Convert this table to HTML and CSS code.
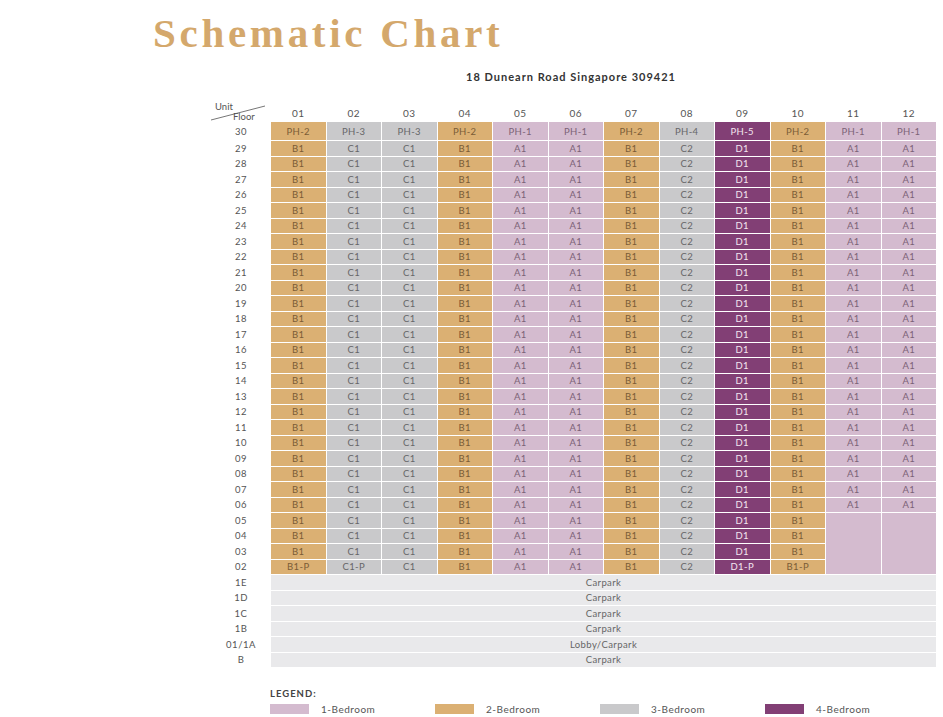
FILE: index.html
```html
<!DOCTYPE html>
<html>
<head>
<meta charset="utf-8">
<title>Schematic Chart</title>
<link rel="stylesheet" href="styles.css">
</head>
<body>
<div class="page">
  <h1 class="title">Schematic Chart</h1>
  <div class="chart">
    <div class="address">18 Dunearn Road Singapore 309421</div>
    <div class="grid">
      <div class="corner">
        <span class="unit">Unit</span>
        <svg class="slash" width="60" height="20" viewBox="0 0 60 20"><line x1="4" y1="17" x2="58" y2="3" stroke="#666" stroke-width="0.9"/></svg>
        <span class="floor">Floor</span>
      </div>
      <div class="ch">01</div><div class="ch">02</div><div class="ch">03</div><div class="ch">04</div><div class="ch">05</div><div class="ch">06</div><div class="ch">07</div><div class="ch">08</div><div class="ch">09</div><div class="ch">10</div><div class="ch">11</div><div class="ch">12</div>

      <div class="fl top">30</div>
      <div class="c t top">PH-2</div><div class="c g top">PH-3</div><div class="c g top">PH-3</div><div class="c t top">PH-2</div><div class="c p top">PH-1</div><div class="c p top">PH-1</div><div class="c t top">PH-2</div><div class="c g top">PH-4</div><div class="c d top">PH-5</div><div class="c t top">PH-2</div><div class="c p top">PH-1</div><div class="c p top">PH-1</div>

      <div class="fl">29</div><div class="c t">B1</div><div class="c g">C1</div><div class="c g">C1</div><div class="c t">B1</div><div class="c p">A1</div><div class="c p">A1</div><div class="c t">B1</div><div class="c g">C2</div><div class="c d">D1</div><div class="c t">B1</div><div class="c p">A1</div><div class="c p">A1</div>
      <div class="fl">28</div><div class="c t">B1</div><div class="c g">C1</div><div class="c g">C1</div><div class="c t">B1</div><div class="c p">A1</div><div class="c p">A1</div><div class="c t">B1</div><div class="c g">C2</div><div class="c d">D1</div><div class="c t">B1</div><div class="c p">A1</div><div class="c p">A1</div>
      <div class="fl">27</div><div class="c t">B1</div><div class="c g">C1</div><div class="c g">C1</div><div class="c t">B1</div><div class="c p">A1</div><div class="c p">A1</div><div class="c t">B1</div><div class="c g">C2</div><div class="c d">D1</div><div class="c t">B1</div><div class="c p">A1</div><div class="c p">A1</div>
      <div class="fl">26</div><div class="c t">B1</div><div class="c g">C1</div><div class="c g">C1</div><div class="c t">B1</div><div class="c p">A1</div><div class="c p">A1</div><div class="c t">B1</div><div class="c g">C2</div><div class="c d">D1</div><div class="c t">B1</div><div class="c p">A1</div><div class="c p">A1</div>
      <div class="fl">25</div><div class="c t">B1</div><div class="c g">C1</div><div class="c g">C1</div><div class="c t">B1</div><div class="c p">A1</div><div class="c p">A1</div><div class="c t">B1</div><div class="c g">C2</div><div class="c d">D1</div><div class="c t">B1</div><div class="c p">A1</div><div class="c p">A1</div>
      <div class="fl">24</div><div class="c t">B1</div><div class="c g">C1</div><div class="c g">C1</div><div class="c t">B1</div><div class="c p">A1</div><div class="c p">A1</div><div class="c t">B1</div><div class="c g">C2</div><div class="c d">D1</div><div class="c t">B1</div><div class="c p">A1</div><div class="c p">A1</div>
      <div class="fl">23</div><div class="c t">B1</div><div class="c g">C1</div><div class="c g">C1</div><div class="c t">B1</div><div class="c p">A1</div><div class="c p">A1</div><div class="c t">B1</div><div class="c g">C2</div><div class="c d">D1</div><div class="c t">B1</div><div class="c p">A1</div><div class="c p">A1</div>
      <div class="fl">22</div><div class="c t">B1</div><div class="c g">C1</div><div class="c g">C1</div><div class="c t">B1</div><div class="c p">A1</div><div class="c p">A1</div><div class="c t">B1</div><div class="c g">C2</div><div class="c d">D1</div><div class="c t">B1</div><div class="c p">A1</div><div class="c p">A1</div>
      <div class="fl">21</div><div class="c t">B1</div><div class="c g">C1</div><div class="c g">C1</div><div class="c t">B1</div><div class="c p">A1</div><div class="c p">A1</div><div class="c t">B1</div><div class="c g">C2</div><div class="c d">D1</div><div class="c t">B1</div><div class="c p">A1</div><div class="c p">A1</div>
      <div class="fl">20</div><div class="c t">B1</div><div class="c g">C1</div><div class="c g">C1</div><div class="c t">B1</div><div class="c p">A1</div><div class="c p">A1</div><div class="c t">B1</div><div class="c g">C2</div><div class="c d">D1</div><div class="c t">B1</div><div class="c p">A1</div><div class="c p">A1</div>
      <div class="fl">19</div><div class="c t">B1</div><div class="c g">C1</div><div class="c g">C1</div><div class="c t">B1</div><div class="c p">A1</div><div class="c p">A1</div><div class="c t">B1</div><div class="c g">C2</div><div class="c d">D1</div><div class="c t">B1</div><div class="c p">A1</div><div class="c p">A1</div>
      <div class="fl">18</div><div class="c t">B1</div><div class="c g">C1</div><div class="c g">C1</div><div class="c t">B1</div><div class="c p">A1</div><div class="c p">A1</div><div class="c t">B1</div><div class="c g">C2</div><div class="c d">D1</div><div class="c t">B1</div><div class="c p">A1</div><div class="c p">A1</div>
      <div class="fl">17</div><div class="c t">B1</div><div class="c g">C1</div><div class="c g">C1</div><div class="c t">B1</div><div class="c p">A1</div><div class="c p">A1</div><div class="c t">B1</div><div class="c g">C2</div><div class="c d">D1</div><div class="c t">B1</div><div class="c p">A1</div><div class="c p">A1</div>
      <div class="fl">16</div><div class="c t">B1</div><div class="c g">C1</div><div class="c g">C1</div><div class="c t">B1</div><div class="c p">A1</div><div class="c p">A1</div><div class="c t">B1</div><div class="c g">C2</div><div class="c d">D1</div><div class="c t">B1</div><div class="c p">A1</div><div class="c p">A1</div>
      <div class="fl">15</div><div class="c t">B1</div><div class="c g">C1</div><div class="c g">C1</div><div class="c t">B1</div><div class="c p">A1</div><div class="c p">A1</div><div class="c t">B1</div><div class="c g">C2</div><div class="c d">D1</div><div class="c t">B1</div><div class="c p">A1</div><div class="c p">A1</div>
      <div class="fl">14</div><div class="c t">B1</div><div class="c g">C1</div><div class="c g">C1</div><div class="c t">B1</div><div class="c p">A1</div><div class="c p">A1</div><div class="c t">B1</div><div class="c g">C2</div><div class="c d">D1</div><div class="c t">B1</div><div class="c p">A1</div><div class="c p">A1</div>
      <div class="fl">13</div><div class="c t">B1</div><div class="c g">C1</div><div class="c g">C1</div><div class="c t">B1</div><div class="c p">A1</div><div class="c p">A1</div><div class="c t">B1</div><div class="c g">C2</div><div class="c d">D1</div><div class="c t">B1</div><div class="c p">A1</div><div class="c p">A1</div>
      <div class="fl">12</div><div class="c t">B1</div><div class="c g">C1</div><div class="c g">C1</div><div class="c t">B1</div><div class="c p">A1</div><div class="c p">A1</div><div class="c t">B1</div><div class="c g">C2</div><div class="c d">D1</div><div class="c t">B1</div><div class="c p">A1</div><div class="c p">A1</div>
      <div class="fl">11</div><div class="c t">B1</div><div class="c g">C1</div><div class="c g">C1</div><div class="c t">B1</div><div class="c p">A1</div><div class="c p">A1</div><div class="c t">B1</div><div class="c g">C2</div><div class="c d">D1</div><div class="c t">B1</div><div class="c p">A1</div><div class="c p">A1</div>
      <div class="fl">10</div><div class="c t">B1</div><div class="c g">C1</div><div class="c g">C1</div><div class="c t">B1</div><div class="c p">A1</div><div class="c p">A1</div><div class="c t">B1</div><div class="c g">C2</div><div class="c d">D1</div><div class="c t">B1</div><div class="c p">A1</div><div class="c p">A1</div>
      <div class="fl">09</div><div class="c t">B1</div><div class="c g">C1</div><div class="c g">C1</div><div class="c t">B1</div><div class="c p">A1</div><div class="c p">A1</div><div class="c t">B1</div><div class="c g">C2</div><div class="c d">D1</div><div class="c t">B1</div><div class="c p">A1</div><div class="c p">A1</div>
      <div class="fl">08</div><div class="c t">B1</div><div class="c g">C1</div><div class="c g">C1</div><div class="c t">B1</div><div class="c p">A1</div><div class="c p">A1</div><div class="c t">B1</div><div class="c g">C2</div><div class="c d">D1</div><div class="c t">B1</div><div class="c p">A1</div><div class="c p">A1</div>
      <div class="fl">07</div><div class="c t">B1</div><div class="c g">C1</div><div class="c g">C1</div><div class="c t">B1</div><div class="c p">A1</div><div class="c p">A1</div><div class="c t">B1</div><div class="c g">C2</div><div class="c d">D1</div><div class="c t">B1</div><div class="c p">A1</div><div class="c p">A1</div>
      <div class="fl">06</div><div class="c t">B1</div><div class="c g">C1</div><div class="c g">C1</div><div class="c t">B1</div><div class="c p">A1</div><div class="c p">A1</div><div class="c t">B1</div><div class="c g">C2</div><div class="c d">D1</div><div class="c t">B1</div><div class="c p">A1</div><div class="c p">A1</div>
      <div class="fl">05</div><div class="c t">B1</div><div class="c g">C1</div><div class="c g">C1</div><div class="c t">B1</div><div class="c p">A1</div><div class="c p">A1</div><div class="c t">B1</div><div class="c g">C2</div><div class="c d">D1</div><div class="c t">B1</div><div class="c p span4"></div><div class="c p span4"></div>
      <div class="fl">04</div><div class="c t">B1</div><div class="c g">C1</div><div class="c g">C1</div><div class="c t">B1</div><div class="c p">A1</div><div class="c p">A1</div><div class="c t">B1</div><div class="c g">C2</div><div class="c d">D1</div><div class="c t">B1</div>
      <div class="fl">03</div><div class="c t">B1</div><div class="c g">C1</div><div class="c g">C1</div><div class="c t">B1</div><div class="c p">A1</div><div class="c p">A1</div><div class="c t">B1</div><div class="c g">C2</div><div class="c d">D1</div><div class="c t">B1</div>
      <div class="fl">02</div><div class="c t">B1-P</div><div class="c g">C1-P</div><div class="c g">C1</div><div class="c t">B1</div><div class="c p">A1</div><div class="c p">A1</div><div class="c t">B1</div><div class="c g">C2</div><div class="c d">D1-P</div><div class="c t">B1-P</div>

      <div class="fl">1E</div><div class="c cp">Carpark</div>
      <div class="fl">1D</div><div class="c cp">Carpark</div>
      <div class="fl">1C</div><div class="c cp">Carpark</div>
      <div class="fl">1B</div><div class="c cp">Carpark</div>
      <div class="fl">01/1A</div><div class="c cp">Lobby/Carpark</div>
      <div class="fl">B</div><div class="c cp">Carpark</div>
    </div>
  </div>
  <div class="legend">
    <div class="legend-title">LEGEND:</div>
    <div class="legend-items">
      <div class="li"><span class="sw p"></span><span class="lt">1-Bedroom</span></div>
      <div class="li"><span class="sw t"></span><span class="lt">2-Bedroom</span></div>
      <div class="li"><span class="sw g"></span><span class="lt">3-Bedroom</span></div>
      <div class="li"><span class="sw d"></span><span class="lt">4-Bedroom</span></div>
    </div>
  </div>
</div>
</body>
</html>
```
FILE: styles.css
```css
html, body {
  margin: 0;
  padding: 0;
  background: #ffffff;
}
.page {
  width: 943px;
  height: 717px;
  overflow: hidden;
  font-family: "Lato", "DejaVu Sans", sans-serif;
}
.title {
  margin: 0;
  padding: 11px 0 0 153px;
  height: 44px;
  font-family: "Liberation Serif", serif;
  font-weight: 700;
  font-size: 41px;
  line-height: 44px;
  letter-spacing: 3.7px;
  color: #d4a86c;
}
.chart {
  margin-left: 205px;
  width: 732px;
}
.address {
  margin-top: 13px;
  height: 18px;
  line-height: 18px;
  text-align: center;
  font-size: 11px;
  font-weight: 700;
  letter-spacing: 1px;
  color: #333;
}
.grid {
  margin-top: 17px;
  display: grid;
  grid-template-columns: 65px repeat(12, 54.5px);
  grid-template-rows: 18px 18px repeat(34, 14.5px);
  gap: 1px;
  font-size: 9.5px;
}
.corner {
  position: relative;
  font-size: 9.5px;
  color: #555;
}
.unit {
  position: absolute;
  left: 10px;
  top: -2px;
}
.floor {
  position: absolute;
  left: 28px;
  top: 8px;
}
.slash {
  position: absolute;
  left: 2px;
  top: 0px;
}
.ch {
  display: flex;
  align-items: center;
  justify-content: center;
  color: #555;
  font-size: 10px;
  letter-spacing: 0.5px;
  padding-top: 2px;
}
.fl {
  display: flex;
  align-items: center;
  justify-content: center;
  padding-left: 7px;
  color: #555;
  font-size: 9.5px;
  letter-spacing: 0.5px;
}
.c {
  display: flex;
  align-items: center;
  justify-content: center;
  letter-spacing: 0.4px;
}
.t { background: #dbb073; color: #7a5c36; }
.g { background: #c9c9cb; color: #666668; }
.p { background: #d4bbcf; color: #7b6276; }
.d { background: #823f75; color: #f3e6f0; }
.span4 { grid-row: span 4; }
.cp {
  grid-column: span 12;
  background: #e9e9eb;
  color: #666;
}
.legend {
  margin-left: 270px;
  margin-top: 20px;
}
.legend-title {
  font-size: 9.5px;
  font-weight: 700;
  letter-spacing: 1px;
  color: #444;
  height: 14px;
  line-height: 14px;
}
.legend-items {
  margin-top: 2px;
  display: grid;
  grid-template-columns: repeat(4, 165px);
}
.li {
  display: flex;
  align-items: center;
  gap: 12px;
  height: 12px;
}
.sw {
  width: 39px;
  height: 10px;
  display: block;
}
.lt {
  font-size: 10px;
  letter-spacing: 0.5px;
  color: #555;
}
```
